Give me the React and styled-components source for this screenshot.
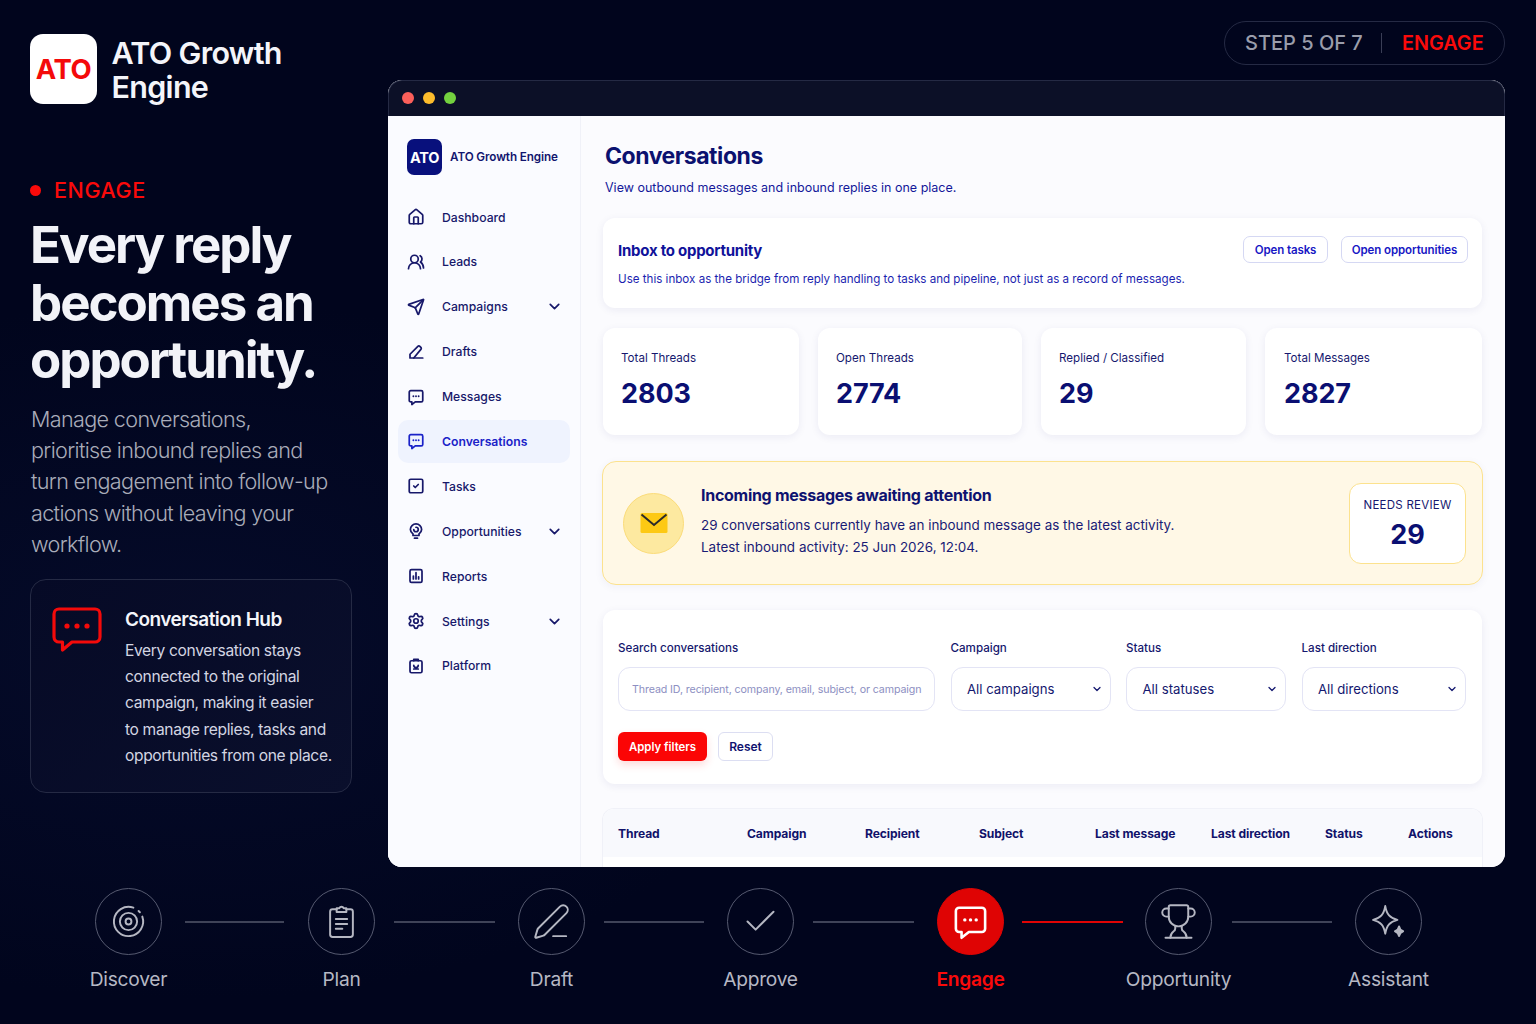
import React from "react";
import styled, { createGlobalStyle } from "styled-components";
import { House, UsersRound, Send, SquareCheck, Settings, ChevronDown, Check, Trophy, PenLine } from "lucide-react";

const Global = createGlobalStyle`
  html, body { margin: 0; padding: 0; background: #01051d; }
  body { font-family: Inter, "Liberation Sans", sans-serif; -webkit-font-smoothing: antialiased; }
  * { box-sizing: border-box; }
`;

const Page = styled.div`
  width: 1536px; height: 1024px; overflow: hidden; display: flex; flex-direction: column;
  background: radial-gradient(900px 500px at 190px 650px, #050b2a 0%, #01051d 70%);
`;
const Top = styled.div`display: flex; height: 867px;`;
const Left = styled.aside`width: 388px; flex: none; padding: 34px 0 0 30px;`;
const LogoRow = styled.div`display: flex; align-items: center; gap: 14.5px; height: 70px;`;
const LogoTile = styled.div`
  width: 67px; height: 70px; border-radius: 13px; background: #fff; color: #f40a0a;
  display: flex; align-items: center; justify-content: center; font-size: 27.5px; font-weight: 700; letter-spacing: -.5px;
`;
const LogoName = styled.div`color: #f4f5fa; font-size: 30.5px; line-height: 34px; font-weight: 600; letter-spacing: -.7px; width: 200px; margin-top: 1px;`;
const Eyebrow = styled.div`
  display: flex; align-items: center; gap: 13px; margin-top: 73px; height: 26px; color: #fa0a0a; font-size: 21.5px; font-weight: 500; letter-spacing: .6px;
  &::before { content: ""; width: 11px; height: 11px; border-radius: 50%; background: #fa0a0a; }
`;
const Headline = styled.h1`margin: 13px 0 0; color: #f2f3f8; font-size: 51px; line-height: 57.5px; font-weight: 700; letter-spacing: -2px;`;
const Lead = styled.p`margin: 15px 0 0; width: 340px; color: #a9acb9; font-size: 21.6px; line-height: 31.4px; font-weight: 300; letter-spacing: -.66px; padding-left: 1px;`;
const HubCard = styled.div`
  margin-top: 18px; width: 322px; height: 214px; border: 1px solid #252a44; border-radius: 16px; padding: 26px 0 0 21px;
  display: flex; gap: 23px; background: linear-gradient(140deg, #060a26, #0a0f2c);
`;
const HubIcon = styled.svg`width: 50px; height: 46px; flex: none; margin-top: 1px;`;
const HubBody = styled.div`flex: 1;`;
const HubTitle = styled.div`color: #f4f5fa; font-size: 19px; line-height: 28px; font-weight: 600; letter-spacing: -.52px;`;
const HubText = styled.div`margin-top: 4.500px; color: #d3d5e2; font-size: 15.6px; line-height: 26.2px; font-weight: 400; letter-spacing: -.36px; white-space: nowrap;`;

const Right = styled.main`flex: 1; padding: 21px 31px 0 0; display: flex; flex-direction: column; align-items: flex-end; min-width: 0;`;
const StepPill = styled.div`
  width: 281px; height: 44px; border: 1px solid #252a44; border-radius: 22px; display: flex; align-items: center; padding-left: 20px; font-size: 20px;
`;
const StepCount = styled.span`color: #9a9dab; font-weight: 500; width: 136px;`;
const StepSep = styled.span`width: 1px; height: 20px; background: #3a3e56; margin-right: 20px;`;
const StepName = styled.span`color: #fb0a0a; font-weight: 600; font-size: 19.8px;`;

const Win = styled.div`margin-top: 15px; width: 1117px; height: 787px; border-radius: 14px; overflow: hidden; display: flex; flex-direction: column; background: #fff;`;
const TitleBar = styled.div`height: 36px; flex: none; background: #0c1027; display: flex; align-items: center; gap: 9px; padding: 0 0 1px 13px; border: 1px solid #252a44; border-bottom: 0; border-radius: 14px 14px 0 0;`;
const Dot = styled.span`width: 12px; height: 12px; border-radius: 50%; background: ${p => p.$c};`;
const WinBody = styled.div`flex: 1; display: flex; min-height: 0; background: #fbfbfe;`;

const Side = styled.nav`width: 193px; flex: none; background: #fafbff; border-right: 1px solid #f0f1f8; padding: 23px 10px 0;`;
const Brand = styled.div`display: flex; align-items: center; gap: 8px; padding-left: 9px; height: 36px; margin-bottom: 20.500px;`;
const BrandTile = styled.div`width: 35px; height: 36px; border-radius: 7px; background: #08107c; color: #fff; font-size: 14.5px; font-weight: 700; letter-spacing: -.3px; display: flex; align-items: center; justify-content: center;`;
const BrandName = styled.div`color: #11156e; font-size: 11.7px; font-weight: 600; letter-spacing: -.1px; white-space: nowrap;`;
const NavList = styled.div`display: flex; flex-direction: column; gap: 1.9px;`;
const NavRow = styled.div`
  height: 43px; display: flex; align-items: center; gap: 17px; padding: 0 7px 0 9px; border-radius: 10px;
  color: ${p => p.$active ? "#1a22c8" : "#17186a"}; background: ${p => p.$active ? "#eff3fe" : "transparent"};
  font-size: 12.2px; font-weight: ${p => p.$active ? 600 : 500};
  & > svg:first-child { width: 18px; height: 18px; flex: none; stroke-width: 2.3; }
`;
const NavLabel = styled.span`flex: 1;`;

const Content = styled.div`flex: 1; padding: 25px 22px 0 22px; min-width: 0;`;
const PageTitle = styled.h2`margin: 0; color: #0b116f; font-size: 23px; line-height: 30px; font-weight: 700; letter-spacing: -.45px; padding-left: 2px;`;
const PageSub = styled.div`margin-top: 9px; color: #14189a; font-size: 12.5px; line-height: 16px; padding-left: 2px;`;
const Card = styled.section`background: #fff; border-radius: 12px; box-shadow: 0 2px 8px rgba(30,35,110,.07);`;
const InboxCard = styled(Card)`margin-top: 22px; width: 879px; height: 90px; padding: 18px 14px 0 15px;`;
const InboxHead = styled.div`display: flex; align-items: flex-start; justify-content: space-between; height: 27px;`;
const InboxTitle = styled.div`color: #10129a; font-size: 15px; line-height: 29px; font-weight: 700; letter-spacing: -.25px;`;
const Actions = styled.div`display: flex; gap: 13px;`;
const LinkBtn = styled.div`width: ${p => p.$w}px; height: 27px; border: 1.5px solid #d5d8f3; border-radius: 7px; display: flex; align-items: center; justify-content: center; color: #1717c4; font-size: 11.5px; font-weight: 600; letter-spacing: -.1px; background: #fff;`;
const InboxText = styled.div`margin-top: 8px; color: #1c1fb0; font-size: 11.6px; line-height: 16px;`;

const Stats = styled.div`margin-top: 20px; display: grid; grid-template-columns: 196px 204px 205px 217px; gap: 19px;`;
const Stat = styled(Card)`height: 107px; padding: 22px 18px 0; padding-left: ${p => p.$pl || 18}px;`;
const StatLabel = styled.div`color: #16186f; font-size: 11.6px; line-height: 17px;`;
const StatValue = styled.div`margin-top: 9px; color: #0a0f72; font-size: 27px; line-height: 36px; font-weight: 700; letter-spacing: -.1px;`;

const Banner = styled.section`
  margin: 26px 0 0 -1px; width: 881px; height: 124px; background: #fff8e6; border: 1.5px solid #fce28e; border-radius: 14px;
  display: flex; align-items: center; padding: 0 16px 0 20px; box-shadow: 0 2px 8px rgba(30,35,110,.05);
`;
const MailCircle = styled.div`width: 61px; height: 61px; border-radius: 50%; background: #fde9a0; border: 1px solid #fbdc7a; flex: none; display: flex; align-items: center; justify-content: center;`;
const BannerText = styled.div`flex: 1; margin-left: 17px; margin-top: -4px;`;
const BannerTitle = styled.div`color: #0e1270; font-size: 16px; line-height: 22px; font-weight: 700; letter-spacing: -.28px; margin-bottom: 9px;`;
const BannerLine = styled.div`color: #191b75; font-size: 13.45px; line-height: 21.5px;`;
const Badge = styled.div`width: 117px; height: 81px; background: #fff; border: 1.5px solid #fce28e; border-radius: 12px; display: flex; flex-direction: column; align-items: center; padding-top: 13px;`;
const BadgeLabel = styled.div`color: #16186f; font-size: 11.5px; line-height: 16px; letter-spacing: .25px; white-space: nowrap;`;
const BadgeValue = styled.div`margin-top: 4px; color: #0a0f72; font-size: 27px; line-height: 36px; font-weight: 700;`;

const FilterCard = styled(Card)`margin-top: 25px; width: 879px; height: 174px; padding: 29px 17px 0 15px;`;
const FilterGrid = styled.div`display: grid; grid-template-columns: 317px 160px 160px 164px; gap: 8px 15.500px;`;
const FieldLabel = styled.div`color: #15176e; font-size: 11.6px; line-height: 18px; font-weight: 500; margin-bottom: 10px;`;
const SearchInput = styled.input`
  width: 100%; height: 44px; border: 1.5px solid #e3e4f5; border-radius: 12px; padding: 0 4px 0 13px; background: #fff; outline: none;
  font: 400 10.65px Inter, sans-serif; letter-spacing: -.1px; color: #14186f;
  &::placeholder { color: #8d8fc2; opacity: 1; }
`;
const SelectBox = styled.div`
  height: 44px; border: 1.5px solid #e3e4f5; border-radius: 12px; padding: 0 7px 0 15.500px; background: #fff; display: flex; align-items: center; justify-content: space-between;
  color: #14186f; font-size: 13.2px;
  & svg { width: 12px; height: 12px; }
`;
const BtnRow = styled.div`display: flex; gap: 11px; margin-top: 21px;`;
const ApplyBtn = styled.div`height: 29px; width: 89px; border-radius: 6px; background: #fb0505; color: #fff; font-size: 11.4px; font-weight: 600; display: flex; align-items: center; justify-content: center; box-shadow: 0 4px 8px rgba(250,5,5,.15);`;
const ResetBtn = styled.div`height: 29px; width: 55px; border-radius: 6px; border: 1.5px solid #dcdef2; background: #fff; color: #10126f; font-size: 12px; font-weight: 600; display: flex; align-items: center; justify-content: center;`;

const TableCard = styled.section`margin: 24px 0 0 -1px; width: 881px; background: #fff; border: 1px solid #f0f1f8; border-bottom: 0; border-radius: 12px 12px 0 0; overflow: hidden; height: 60px;`;
const TableHead = styled.div`height: 48px; background: #f8f9fd; display: grid; grid-template-columns: 129px 118px 114px 116px 116px 114px 83px 1fr; align-items: center; padding-left: 15px;`;
const Th = styled.div`color: #10126a; font-size: 12.1px; font-weight: 700; letter-spacing: -.1px; white-space: nowrap;`;

const Stepper = styled.div`flex: 1; display: flex; padding: 21px 0 0 95px;`;
const Step = styled.div`width: 67px; flex: none; display: flex; flex-direction: column; align-items: center;`;
const StepCircle = styled.div`
  width: 67px; height: 67px; border-radius: 50%; display: flex; align-items: center; justify-content: center;
  border: 1px solid ${p => p.$active ? "#e00404" : "#565a70"}; background: ${p => p.$active ? "#df0404" : "transparent"};
  color: ${p => p.$active ? "#fff" : "#b5b7c2"};
  & svg { width: 39px; height: 39px; }
`;
const StepLabel = styled.div`margin-top: 10px; white-space: nowrap; font-size: 19.2px; line-height: 28px; letter-spacing: -.25px; color: ${p => p.$active ? "#fa0a0a" : "#b6b8c4"}; font-weight: ${p => p.$active ? 600 : 400};`;
const Connector = styled.div`
  width: ${p => p.$w}px; height: 2px; flex: none; margin: 32.5px ${p => p.$mr}px 0 ${p => p.$ml}px; background: ${p => p.$active ? "#e00404" : "#3f4358"};
`;

const S = { fill: "none", stroke: "currentColor", strokeLinecap: "round", strokeLinejoin: "round" };
const Icon = ({ children, sw = 2, vb = "0 0 24 24" }) => <svg viewBox={vb} {...S} strokeWidth={sw}>{children}</svg>;

const BubbleIcon = ({ sw = 2 }) => (
  <Icon sw={sw}>
    <path d="M5 3.500h14a2 2 0 0 1 2 2v11a2 2 0 0 1-2 2H11l-4.500 3.500V18.500H5a2 2 0 0 1-2-2v-11a2 2 0 0 1 2-2z" />
    <path d="M8.500 11h.01M12 11h.01M15.500 11h.01" strokeWidth={sw + .5} />
  </Icon>
);
const DraftIcon = () => <Icon><path d="M4 20v-5L14.500 4.500a1.800 1.800 0 0 1 2.600 0l1.400 1.400a1.800 1.800 0 0 1 0 2.600L9 20z" /><path d="M9 20h12" /></Icon>;
const AwardIcon = () => <Icon><path d="M12 2.500A7.500 7.500 0 0 0 4.500 10c0 3 1.800 4.500 3.500 6v2h8v-2c1.700-1.500 3.500-3 3.500-6A7.500 7.500 0 0 0 12 2.500z" /><path d="M9 10a3 3 0 1 0 3-3" /><path d="M10 21.500h4" /></Icon>;
const ReportIcon = () => <Icon><rect x="4" y="3.500" width="16" height="17" rx="2" /><path d="M8.500 16v-4M12 16V7.500M15.500 16v-3" /></Icon>;
const PlatformIcon = () => <Icon><rect x="4" y="5" width="16" height="16" rx="2" /><path d="M9 5V3h6v2M9 11a3 3 0 0 0 6 0M9 16h6" /></Icon>;
const PlanIcon = () => <Icon sw={1.200}><path d="M9 4.500H6.500A1.500 1.500 0 0 0 5 6v14a1.500 1.500 0 0 0 1.500 1.500h11A1.500 1.500 0 0 0 19 20V6a1.500 1.500 0 0 0-1.500-1.500H15" /><path d="M9 3.800h1.700a1.400 1.400 0 0 1 2.600 0H15v2.400H9z" /><path d="M8.500 10.500h7M8.500 13.500h7M8.500 16.500h4" /></Icon>;
const SparkIcon = () => <Icon sw={1.200}><path d="M10 2.500c.9 5.200 2.800 7.300 7.500 8.500-4.700 1.200-6.600 3.300-7.500 8.500-.9-5.200-2.800-7.300-7.500-8.500 4.700-1.200 6.600-3.300 7.500-8.500z" /><path d="M18.500 15c.3 1.800 1 2.500 2.500 3-1.500.5-2.200 1.200-2.500 3-.3-1.800-1-2.500-2.500-3 1.500-.5 2.200-1.200 2.500-3z" fill="currentColor" /></Icon>;
const DiscoverIcon = () => <Icon sw={1.200}><path d="M15 3.500A9 9 0 1 0 20.500 9" /><path d="M18.200 5.500l.8.8" /><circle cx="12" cy="12" r="5.300" /><circle cx="12" cy="12" r="1.800" /></Icon>;

const nav = [
  ["Dashboard", <House />],
  ["Leads", <UsersRound />],
  ["Campaigns", <Send />, true],
  ["Drafts", <DraftIcon />],
  ["Messages", <BubbleIcon />],
  ["Conversations", <BubbleIcon />, false, true],
  ["Tasks", <SquareCheck />],
  ["Opportunities", <AwardIcon />, true],
  ["Reports", <ReportIcon />],
  ["Settings", <Settings />, true],
  ["Platform", <PlatformIcon />],
];
const steps = [
  ["Discover", <DiscoverIcon />],
  ["Plan", <PlanIcon />],
  ["Draft", <PenLine strokeWidth={1.200} />],
  ["Approve", <Check strokeWidth={1.200} />],
  ["Engage", <BubbleIcon sw={1.600} />, true],
  ["Opportunity", <Trophy strokeWidth={1.200} />],
  ["Assistant", <SparkIcon />],
];
const connectors = [[99, 23, 24], [101, 19, 23], [100, 19, 23], [101, 19, 23], [101, 18, 22, true], [100, 20, 23]];
const stats = [["Total Threads", "2803", 18], ["Open Threads", "2774", 18], ["Replied / Classified", "29", 18], ["Total Messages", "2827", 19]];
const selects = [["Campaign", "All campaigns"], ["Status", "All statuses"], ["Last direction", "All directions"]];
const cols = ["Thread", "Campaign", "Recipient", "Subject", "Last message", "Last direction", "Status", "Actions"];

export default function App() {
  return (
    <Page>
      <Global />
      <Top>
        <Left>
          <LogoRow>
            <LogoTile>ATO</LogoTile>
            <LogoName>ATO Growth Engine</LogoName>
          </LogoRow>
          <Eyebrow>ENGAGE</Eyebrow>
          <Headline>Every reply<br />becomes an<br />opportunity.</Headline>
          <Lead>Manage conversations,<br />prioritise inbound replies and<br />turn engagement into follow-up<br />actions without leaving your<br />workflow.</Lead>
          <HubCard>
            <HubIcon viewBox="0 0 50 46" fill="none">
              <path d="M7 2h36a5 5 0 0 1 5 5v23a5 5 0 0 1-5 5H20l-9.500 8v-8H7a5 5 0 0 1-5-5V7a5 5 0 0 1 5-5z" stroke="#f40a0a" strokeWidth="3.200" strokeLinejoin="round" />
              <circle cx="15" cy="19" r="2.600" fill="#f40a0a" /><circle cx="25" cy="19" r="2.600" fill="#f40a0a" /><circle cx="35" cy="19" r="2.600" fill="#f40a0a" />
            </HubIcon>
            <HubBody>
              <HubTitle>Conversation Hub</HubTitle>
              <HubText>Every conversation stays<br />connected to the original<br />campaign, making it easier<br />to manage replies, tasks and<br />opportunities from one place.</HubText>
            </HubBody>
          </HubCard>
        </Left>
        <Right>
          <StepPill>
            <StepCount>STEP 5 OF 7</StepCount>
            <StepSep />
            <StepName>ENGAGE</StepName>
          </StepPill>
          <Win>
            <TitleBar><Dot $c="#fb5f5a" /><Dot $c="#fdbc2c" /><Dot $c="#74d13f" /></TitleBar>
            <WinBody>
              <Side>
                <Brand><BrandTile>ATO</BrandTile><BrandName>ATO Growth Engine</BrandName></Brand>
                <NavList>
                  {nav.map(([label, icon, chev, active]) => (
                    <NavRow key={label} $active={active}>
                      {icon}
                      <NavLabel>{label}</NavLabel>
                      {chev && <ChevronDown size={17} strokeWidth={2.400} />}
                    </NavRow>
                  ))}
                </NavList>
              </Side>
              <Content>
                <PageTitle>Conversations</PageTitle>
                <PageSub>View outbound messages and inbound replies in one place.</PageSub>
                <InboxCard>
                  <InboxHead>
                    <InboxTitle>Inbox to opportunity</InboxTitle>
                    <Actions><LinkBtn $w={85}>Open tasks</LinkBtn><LinkBtn $w={127}>Open opportunities</LinkBtn></Actions>
                  </InboxHead>
                  <InboxText>Use this inbox as the bridge from reply handling to tasks and pipeline, not just as a record of messages.</InboxText>
                </InboxCard>
                <Stats>
                  {stats.map(([l, v, pl]) => (
                    <Stat key={l} $pl={pl}><StatLabel>{l}</StatLabel><StatValue>{v}</StatValue></Stat>
                  ))}
                </Stats>
                <Banner>
                  <MailCircle>
                    <svg width="28" height="22" viewBox="0 0 28 22">
                      <rect x="0.500" y="1" width="27" height="20" rx="1.500" fill="#fdc914" />
                      <path d="M1.500 2.500L14 13L26.500 2.500" fill="none" stroke="#2b2a2a" strokeWidth="2" />
                    </svg>
                  </MailCircle>
                  <BannerText>
                    <BannerTitle>Incoming messages awaiting attention</BannerTitle>
                    <BannerLine>29 conversations currently have an inbound message as the latest activity.</BannerLine>
                    <BannerLine>Latest inbound activity: 25 Jun 2026, 12:04.</BannerLine>
                  </BannerText>
                  <Badge><BadgeLabel>NEEDS REVIEW</BadgeLabel><BadgeValue>29</BadgeValue></Badge>
                </Banner>
                <FilterCard>
                  <FilterGrid>
                    <div>
                      <FieldLabel>Search conversations</FieldLabel>
                      <SearchInput placeholder="Thread ID, recipient, company, email, subject, or campaign" />
                    </div>
                    {selects.map(([l, v]) => (
                      <div key={l}>
                        <FieldLabel>{l}</FieldLabel>
                        <SelectBox>{v}<ChevronDown strokeWidth={2.500} /></SelectBox>
                      </div>
                    ))}
                  </FilterGrid>
                  <BtnRow><ApplyBtn>Apply filters</ApplyBtn><ResetBtn>Reset</ResetBtn></BtnRow>
                </FilterCard>
                <TableCard>
                  <TableHead>{cols.map(c => <Th key={c}>{c}</Th>)}</TableHead>
                </TableCard>
              </Content>
            </WinBody>
          </Win>
        </Right>
      </Top>
      <Stepper>
        {steps.map(([label, icon, active], i) => (
          <React.Fragment key={label}>
            <Step>
              <StepCircle $active={active}>{icon}</StepCircle>
              <StepLabel $active={active}>{label}</StepLabel>
            </Step>
            {connectors[i] && <Connector $w={connectors[i][0]} $ml={connectors[i][1]} $mr={connectors[i][2]} $active={connectors[i][3]} />}
          </React.Fragment>
        ))}
      </Stepper>
    </Page>
  );
}
